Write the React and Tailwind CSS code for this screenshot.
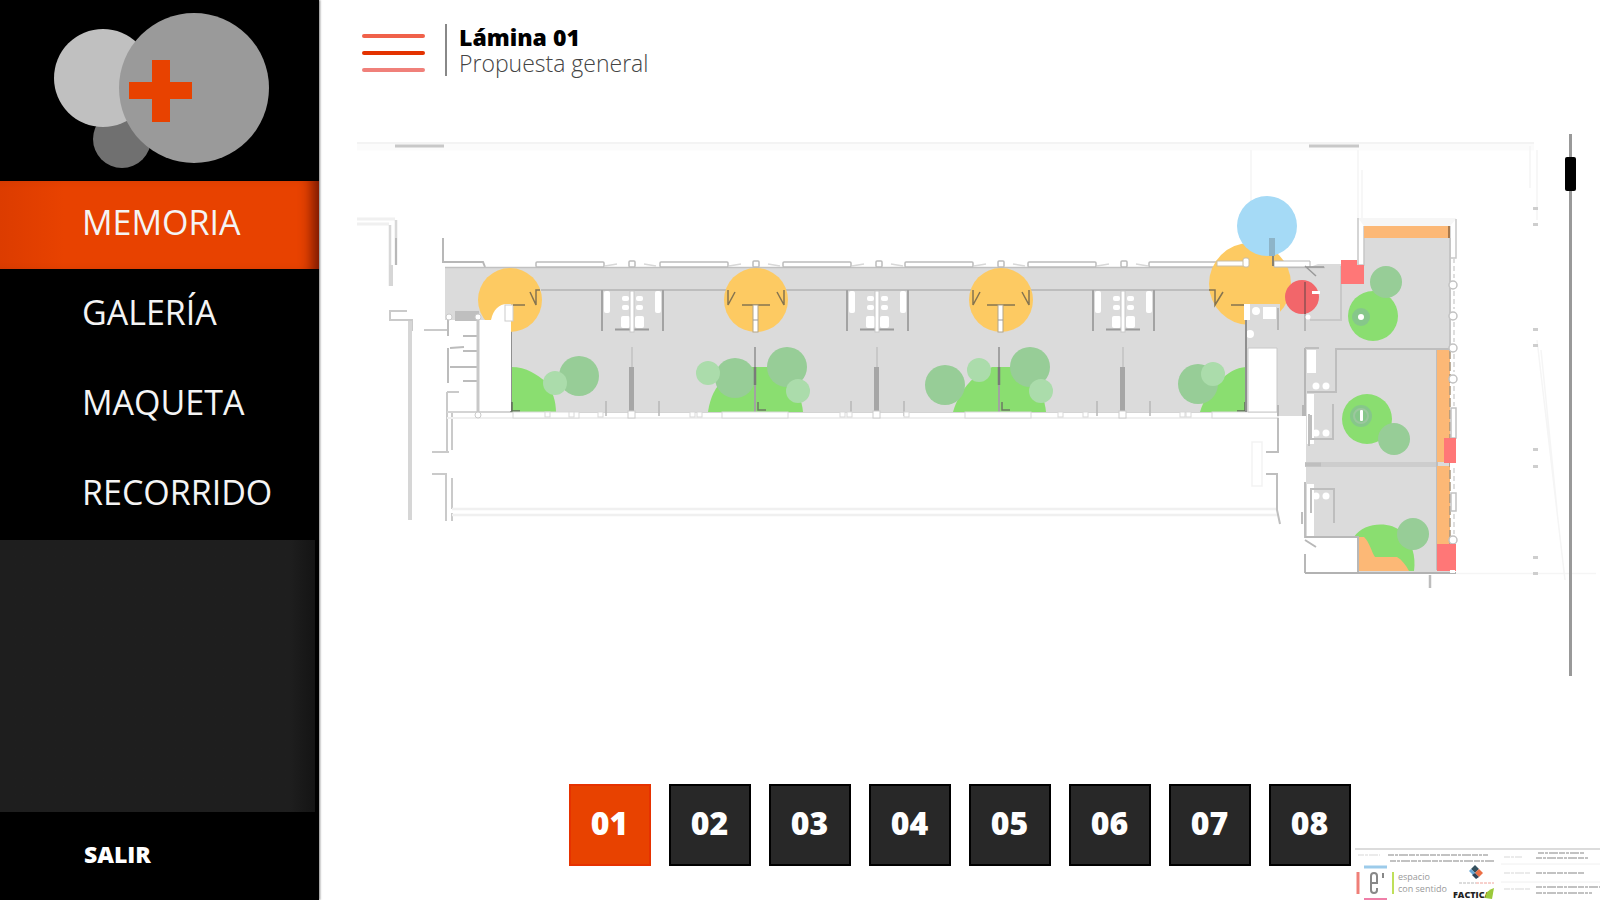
const sections = ["MEMORIA", "GALERÍA", "MAQUETA", "RECORRIDO"];
const sheets = ["01", "02", "03", "04", "05", "06", "07", "08"];

function Logo() {
  return (
    <svg viewBox="0 0 319 180" className="block w-full" role="img" aria-label="Logo">
      <circle cx="122" cy="139" r="29" fill="#707070" />
      <circle cx="103" cy="78" r="49" fill="#c0c0c0" />
      <circle cx="194" cy="88" r="75" fill="#9a9a9a" />
      <path d="M152 60h18v22h22v17h-22v23h-18V99h-23V82h23z" fill="#e84200" />
    </svg>
  );
}

function FacadeWindows() {
  return [536, 660, 783, 905, 1028, 1149].map((x) => (
    <g key={x} fill="#fff" stroke="#bcbcbc" strokeWidth="1.5">
      <rect x={x} y="262" width="68" height="5" rx="1" />
      <path d={`M${x + 69} 266l12-2M${x + 108} 264l12 2`} stroke="#d8d8d8" />
      <rect x={x + 93} y="261" width="6" height="6" rx="1" />
    </g>
  ));
}

function Restrooms({ x }) {
  return (
    <g>
      <path d={`M${x - 30} 290v41M${x + 31} 290v41`} stroke="#a3a3a3" strokeWidth="2" />
      <g fill="#fff">
        <rect x={x - 28} y="291" width="6" height="22" rx="2" />
        <rect x={x + 23} y="291" width="6" height="22" rx="2" />
        {[-10, 4].map((d) => (
          <g key={d}>
            <rect x={x + d} y="296" width="7" height="5" rx="2" />
            <rect x={x + d} y="305" width="7" height="5" rx="2" />
            <rect x={x + d - 1} y="316" width="9" height="12" rx="2" />
          </g>
        ))}
      </g>
      <path d={`M${x - 17} 329.5h34`} stroke="#9a9a9a" strokeWidth="2" />
      <rect x={x - 2} y="291" width="4" height="41" fill="#fff" stroke="#c8c8c8" strokeWidth="1" />
      <path d={`M${x} 347v20`} stroke="#c2c2c2" strokeWidth="1.5" />
      <rect x={x - 3} y="367" width="5" height="45" fill="#a6a6a6" />
      <path d={`M${x - 26} 401v15M${x + 27} 401v15`} stroke="#b8b8b8" strokeWidth="1.5" />
      <rect x={x - 4} y="411" width="7" height="7" fill="#fff" stroke="#ccc" strokeWidth="1" />
    </g>
  );
}

function Doorway({ x }) {
  return (
    <g>
      <circle cx={x} cy="300" r="32" fill="#fdca62" />
      <g stroke="#857450" fill="none" strokeWidth="1.5">
        <path d={`M${x - 28} 290v15l7-13M${x + 28} 290v15l-7-13`} />
        <path d={`M${x - 14} 305h28`} />
      </g>
      <rect x={x - 3} y="305" width="5" height="27" fill="#fff" stroke="#b3a588" strokeWidth="1" />
      <path d={`M${x - 3} 320h5`} stroke="#999" />
    </g>
  );
}

function Divider({ x }) {
  return (
    <g>
      <path d={`M${x} 347v65`} stroke="#a2a2a2" strokeWidth="2" />
      <path d={`M${x} 367v18`} stroke="#7a7a7a" strokeWidth="2.5" />
      <path d={`M${x + 3} 402v8h8`} stroke="#6c7a63" strokeWidth="1.5" fill="none" />
    </g>
  );
}

const greens = [
  [579, 376, 20, "#97cd97"], [555, 383, 12, "#abdcab"],
  [735, 378, 20, "#97cd97"], [708, 373, 12, "#abdcab"],
  [787, 367, 20, "#97cd97"], [798, 391, 12, "#abdcab"],
  [945, 385, 20, "#97cd97"], [979, 370, 12, "#abdcab"],
  [1030, 367, 20, "#97cd97"], [1041, 391, 12, "#abdcab"],
  [1198, 384, 20, "#97cd97"], [1213, 374, 12, "#abdcab"],
];

function FloorPlan() {
  return (
    <svg viewBox="355 120 1245 560" className="block w-full" role="img" aria-label="Planta de la propuesta general">
      {/* plot boundary */}
      <path d="M357 146.5H1534" stroke="#fbfbfb" strokeWidth="8" />
      <path d="M357 143H1534" stroke="#f3f3f3" strokeWidth="2" />
      <path d="M395 146h49M1309 146h50" stroke="#c8c8c8" strokeWidth="3" />
      <path d="M1251 150v56M1358 150v68M1362 170v48M1530 146v42M1537 150v70M1537 340l28 240M1541 350l16 160M1456 573.5h140" stroke="#f5f5f5" strokeWidth="1.5" fill="none" />
      {[208, 224, 329, 345, 449, 466, 557, 573].map((y) => (
        <rect key={y} x="1533" y={y - 1} width="5" height="3" fill="#cecece" />
      ))}

      {/* western walls */}
      <g stroke="#cacaca" strokeWidth="2" fill="none">
        <path d="M357 219h38M357 224h32" stroke="#f0f0f0" strokeWidth="3" />
        <path d="M390 225v61M396 220v45" stroke="#d8d8d8" strokeWidth="2.5" />
        <path d="M396 238v27" stroke="#b8b8b8" />
        <path d="M391 265v21" stroke="#d6d6d6" strokeWidth="4" />
        <path d="M407 311h-17v9h22v11M424 330h23" />
        <path d="M410 321v199" stroke="#d6d6d6" strokeWidth="4" />
        <path d="M443 238v24h40l2 5" stroke="#b8b8b8" />
        <path d="M447 392h12M447 392v60M452 412v38M432 452h17M432 474h15M446 475v46M452 478v31M452 513v8" />
      </g>
      <path d="M452 509h826M452 515h826" stroke="#f0f0f0" strokeWidth="2.5" />
      <path d="M447 418h830" stroke="#efefef" strokeWidth="2" />
      <path d="M447 412h830" stroke="#d4d4d4" strokeWidth="2" />

      {/* floors */}
      <path d="M445 267H1310L1318 264H1341V284H1364V226H1450V573H1358V537H1306V416H1277V348H1248V412H511V320H445Z" fill="#dbdbdb" />
      <path d="M445 267.5H1325" stroke="#c1c1c1" strokeWidth="1.5" />
      <path d="M541 290H1215" stroke="#bdbdbd" strokeWidth="2" />
      <FacadeWindows />

      {/* west service rooms */}
      <rect x="455" y="311" width="24" height="10" fill="#bfbfbf" />
      <g stroke="#bcbcbc" strokeWidth="2" fill="none">
        <path d="M448 315v21M448 348v35M463 336h14M450 348l14-1M463 351h14M450 367h27M463 381h14" />
        <path d="M478 320v92" strokeWidth="3" stroke="#c8c8c8" />
      </g>
      <g fill="#fff" stroke="#cacaca" strokeWidth="1">
        <circle cx="449" cy="317" r="3" />
        <circle cx="478" cy="317" r="3" />
        <circle cx="478" cy="415" r="3" />
      </g>

      {/* classrooms */}
      {[632, 877, 1123].map((x) => <Restrooms key={x} x={x} />)}
      <g fill="#8ade70">
        <path d="M511 367C527 367 537 375 545 381C553 390 556 402 556 412H511Z" />
        <path d="M708 412C710 398 715 386 726 378L748 367H768L786 378C797 388 802 400 803 412Z" />
        <path d="M953 412C956 402 962 388 975 377L992 367H1012L1030 377C1040 388 1045 400 1046 412Z" />
        <path d="M1200 412C1204 399 1210 390 1220 381C1228 372 1236 368 1246 367V412Z" />
      </g>
      {greens.map(([x, y, r, fill]) => <circle key={`${x}-${y}`} cx={x} cy={y} r={r} fill={fill} />)}
      <Divider x={755} />
      <Divider x={999} />
      <path d="M511 320v92M1246 320v92" stroke="#8f8f8f" strokeWidth="2" />
      <path d="M512 402v9h8M1245 402v9h-8" stroke="#5f6b58" strokeWidth="1.5" fill="none" />
      <g fill="#fff" stroke="#d8d8d8" strokeWidth="1">
        {[513, 722, 965, 1212].map((x) => <rect key={x} x={x} y="412" width="66" height="6" />)}
        {[545, 569, 598, 690, 697, 840, 847, 904, 1058, 1083, 1180, 1186].map((x) => (
          <rect key={x} x={x} y="412" width="5" height="5" />
        ))}
      </g>

      <circle cx="510" cy="300" r="32" fill="#fdca62" />
      <path d="M491 320C493 310 499 304 507 304H511V320Z" fill="#fff" />
      <path d="M480 320h31v91h-31z" fill="#fff" />
      <rect x="505" y="305" width="8" height="16" fill="#fff" stroke="#ccc" />
      <path d="M513 305h12M540 290h-4v15l-6-13" stroke="#857450" strokeWidth="1.5" fill="none" />
      <Doorway x={756} />
      <Doorway x={1001} />

      {/* main entrance */}
      <circle cx="1250" cy="284" r="41" fill="#fdca62" />
      <path d="M1209 290h6v15l8-13M1231 305h14" stroke="#857450" strokeWidth="1.5" fill="none" />
      <path d="M1245 304h35v44h-35z" fill="#dbdbdb" />
      <g fill="#fff" stroke="#c9bda4" strokeWidth="1">
        <rect x="1217" y="261" width="30" height="5" />
        <rect x="1243" y="258" width="6" height="9" rx="2" />
      </g>
      <path d="M1274 261h36v6h-36z" fill="#fff" stroke="#b8b8b8" />
      <circle cx="1267" cy="226" r="30" fill="#a5daf6" />
      <path d="M1272 238v18" stroke="#8db4c8" strokeWidth="6" />
      <path d="M1273 256v10" stroke="#8a8270" strokeWidth="2" />
      <g fill="#fff">
        <rect x="1244" y="304" width="6" height="16" />
        <circle cx="1256" cy="311" r="4" />
        <rect x="1263" y="307" width="13" height="12" />
        <circle cx="1250" cy="334" r="4" />
        <path d="M1248 348h29v64h-29z" stroke="#c8c8c8" strokeWidth="1" />
      </g>
      <path d="M1246 320v92" stroke="#8f8f8f" strokeWidth="2" />
      <path d="M1278 308v22M1305 281v50M1305 348v68M1278 405v11M1303 405v11" stroke="#b6b6b6" strokeWidth="2" />
      <path d="M1305 266l11 10M1306 267h18" stroke="#999" strokeWidth="1.5" />
      <circle cx="1302" cy="297" r="17" fill="#f2666a" />
      <path d="M1305 282v32" stroke="#a85557" strokeWidth="2" />
      <path d="M1312 291h8v3h-8z" fill="#fff" />
      <path d="M1310 320h31V284M1341 266v18" stroke="#c8c8c8" strokeWidth="2" fill="none" />
      <circle cx="1308" cy="317" r="2.5" fill="#fff" />

      {/* east wing */}
      <path d="M1358 218h98v8h-98z" fill="#f6f6f6" />
      <path d="M1358 218v47h6V226M1456 219v39h-6v-32" fill="#fff" stroke="#c8c8c8" strokeWidth="1.5" />
      <path d="M1341 260h16v5h7v19h-23z" fill="#ff7777" />
      <path d="M1364 226h86v12h-86z" fill="#fcb876" />
      <path d="M1449 226v12" stroke="#a8794c" strokeWidth="2" />
      <path d="M1450 238v112" stroke="#c6c6c6" strokeWidth="2" />
      <circle cx="1373" cy="316" r="25" fill="#8ade70" />
      <circle cx="1386" cy="282" r="16" fill="#97cd97" />
      <circle cx="1361" cy="317" r="9" fill="#86c78a" />
      <circle cx="1361" cy="317" r="3" fill="#fff" />

      <g fill="#fff">
        <rect x="1307" y="350" width="9" height="23" />
        <rect x="1307" y="394" width="7" height="50" />
        <rect x="1307" y="484" width="7" height="52" />
        {[386, 433, 496].map((y) => (
          <g key={y}>
            <circle cx="1316" cy={y} r="3.5" />
            <circle cx="1326" cy={y} r="3.5" />
          </g>
        ))}
      </g>
      <g stroke="#bebebe" strokeWidth="2" fill="none">
        <path d="M1450 349H1336v43h-29M1305 348h14" />
        <path d="M1333 404v35h-22v-24M1334 523v-34h-23v24M1309 414v32" />
        <path d="M1305 482v56M1302 512v12M1278 418v34h-12M1266 474h11v36l3 14" />
        <path d="M1305 464.500h132" stroke="#cdcdcd" strokeWidth="5" />
        <path d="M1305 464.500h16" strokeWidth="4" />
        <path d="M1437 350v220" />
      </g>
      <path d="M1252 442v44h10v-44z" fill="none" stroke="#f3f3f3" strokeWidth="1.5" />

      <circle cx="1367" cy="419" r="25" fill="#8ade70" />
      <circle cx="1394" cy="439" r="16" fill="#97cd97" />
      <circle cx="1361" cy="416" r="11" fill="#86c78a" />
      <circle cx="1361" cy="416" r="7" fill="none" stroke="#9bc79d" strokeWidth="2" />
      <rect x="1360" y="410" width="3" height="11" rx="1" fill="#fff" />

      <path d="M1354 537C1364 522 1390 521 1402 532C1412 542 1416 556 1414 571H1358V537Z" fill="#8ade70" />
      <path d="M1358 537h6c6 6 7 14 11 20h22c5 3 9 8 12 14h-51z" fill="#fcb876" />
      <circle cx="1413" cy="534" r="16" fill="#97cd97" />
      <path d="M1306 537h52v36h-52z" fill="#fff" />
      <path d="M1305 537h53v36M1305 554v19M1305 540l11 7" stroke="#b8b8b8" strokeWidth="2" fill="none" />
      <path d="M1305 573h151" stroke="#b2b2b2" strokeWidth="2" />
      <path d="M1430 575v13" stroke="#bdbdbd" strokeWidth="2.5" />

      <path d="M1437 350h13v112h-13zM1437 466h13v104h-13z" fill="#fcb876" />
      <path d="M1450 350v220" stroke="#a8957c" strokeWidth="1.5" strokeDasharray="9 3" />
      <g fill="#fff" stroke="#c2c2c2" strokeWidth="1.5">
        {[285, 316, 348, 379, 540].map((y) => <circle key={y} cx="1453" cy={y} r="4" />)}
        <rect x="1451" y="408" width="5" height="30" />
        <rect x="1451" y="493" width="5" height="18" />
      </g>
      <path d="M1454 258v20M1454 291v18M1454 322v20M1454 354v18M1454 386v20M1454 468v24M1454 514v20" stroke="#d4d4d4" strokeWidth="1.5" strokeDasharray="5 3" />
      <path d="M1444 438h12v25h-12zM1437 544h19v27h-19z" fill="#ff7777" />
      <path d="M1450 463h6v4h-6zM1450 570h5v3h-5z" fill="#fff" />
    </svg>
  );
}

function TitleBlock() {
  return (
    <svg viewBox="1355 846 245 54" className="ml-1 block w-full max-w-[245px] self-end" role="img" aria-label="Cajetín: espacio con sentido">
      <path d="M1355 849h245" stroke="#dcdcdc" strokeWidth="2" />
      <path d="M1501 864h99M1501 882h99" stroke="#f0f0f0" strokeWidth="1" />
      <g stroke="#c2c2c2" strokeWidth="2" strokeDasharray="6 1 3 1 9 1">
        <path d="M1388 855h100M1390 861h104" />
        <path d="M1538 853h46M1536 858h52M1536 873h48M1536 887h64M1536 893h56" />
        <path d="M1358 855h22M1504 857h18M1504 873h26M1504 889h26" stroke="#ebebeb" />
      </g>
      <path d="M1364 867h23" stroke="#9ccbea" strokeWidth="3" />
      <path d="M1364 899h23" stroke="#ef7fa8" strokeWidth="2" />
      <path d="M1358 872v22" stroke="#ef7f78" strokeWidth="3" />
      <path d="M1393 872v22" stroke="#bfe05a" strokeWidth="2" />
      <path d="M1371 883h6v-7q0-3-3-3t-3 3v14q0 3 3 3t3-3v-2M1383 873v5" fill="none" stroke="#888" strokeWidth="2" />
      <g fontFamily="Open Sans, sans-serif" fontSize="9" fill="#999">
        <text x="1398" y="880">espacio</text>
        <text x="1398" y="892">con sentido</text>
      </g>
      <path d="M1475 865l4 4-4 4-4-4z" fill="#34505e" />
      <path d="M1479 869l4 4-4 4-4-4z" fill="#ec6f45" />
      <path d="M1471 869l4 4-2 2-4-4z" fill="#6aa9d8" />
      <path d="M1475 873l4 4-3 2-4-4z" fill="#2f4257" />
      <path d="M1459 883h17" stroke="#b9b9b9" strokeWidth="1" strokeDasharray="3 1" />
      <path d="M1476 883h18" stroke="#f0a29a" strokeWidth="1" strokeDasharray="3 1" />
      <text x="1453" y="898" fontFamily="Open Sans, sans-serif" fontSize="9" fontWeight="800" fill="#222">FACTICA</text>
      <path d="M1485 898q1-8 9-10l-2 11z" fill="#9bc93b" />
    </svg>
  );
}

export default function App() {
  return (
    <div className="flex min-h-screen bg-white font-['Open_Sans','Noto_Sans',sans-serif]">
      <aside className="flex w-[319px] shrink-0 flex-col bg-black shadow-[1px_0_2px_rgba(0,0,0,0.5)]">
        <Logo />
        <nav aria-label="Secciones">
          {sections.map((name, i) => (
            <a
              key={name}
              href={`#${name.toLowerCase()}`}
              aria-current={i === 0 ? "page" : undefined}
              className={
                "flex h-[90px] items-center border-y border-black pb-[6px] pl-[82px] text-[34px] leading-none text-[#f4f4f4] " +
                (i === 0 ? "bg-linear-to-r from-[#dc3c00] from-0% via-[#e84200] via-20% to-[#e84200] shadow-[inset_-16px_0_14px_-10px_rgba(60,0,0,0.7)]" : "")
              }
            >
              {name}
            </a>
          ))}
        </nav>
        <div className="mr-1 flex-1 bg-linear-to-r from-[#1e1e1e] from-92% to-[#141414]" />
        <button type="button" className="flex h-[88px] items-center pb-1 pl-[84px] text-[23px] font-extrabold text-white">
          SALIR
        </button>
      </aside>

      <main className="flex min-w-0 flex-1 flex-col">
        <header className="flex h-[120px] items-start gap-5 pt-6 pl-[43px]">
          <button type="button" aria-label="Menú" className="flex flex-col gap-[13px] py-[10px]">
            <span className="h-1 w-[63px] rounded-xs bg-[#f0614a]" />
            <span className="h-1 w-[63px] rounded-xs bg-[#e33200]" />
            <span className="h-1 w-[63px] rounded-xs bg-[#f0807a]" />
          </button>
          <div className="border-l-2 border-[#888] pl-3">
            <h1 className="text-[23px] leading-[26px] font-extrabold text-black">Lámina 01</h1>
            <p className="text-[23px] leading-[26px] font-light text-[#444]">Propuesta general</p>
          </div>
        </header>

        <section className="relative pl-9">
          <FloorPlan />
          <input
            type="range"
            aria-label="Desplazamiento"
            min="0"
            max="22"
            defaultValue="1"
            className="absolute top-[14px] right-6 bottom-1 m-0 w-[11px] appearance-none bg-[linear-gradient(#999,#999)] bg-size-[3px_100%] bg-center bg-no-repeat [writing-mode:vertical-lr] [&::-webkit-slider-thumb]:h-[34px] [&::-webkit-slider-thumb]:w-[11px] [&::-webkit-slider-thumb]:appearance-none [&::-webkit-slider-thumb]:rounded-xs [&::-webkit-slider-thumb]:bg-black"
          />
        </section>

        <footer className="mt-auto grid grid-cols-[1fr_auto_1fr]">
          <nav aria-label="Láminas" className="col-start-2 mb-[34px] flex gap-[18px]">
            {sheets.map((n, i) => (
              <button
                key={n}
                type="button"
                aria-current={i === 0 ? "page" : undefined}
                className={
                  "flex size-[82px] items-center justify-center border-2 pb-1 text-[32px] leading-none font-extrabold text-white " +
                  (i === 0 ? "border-[#e63200] bg-[#e84200]" : "border-black bg-[#282828]")
                }
              >
                {n}
              </button>
            ))}
          </nav>
          <TitleBlock />
        </footer>
      </main>
    </div>
  );
}
